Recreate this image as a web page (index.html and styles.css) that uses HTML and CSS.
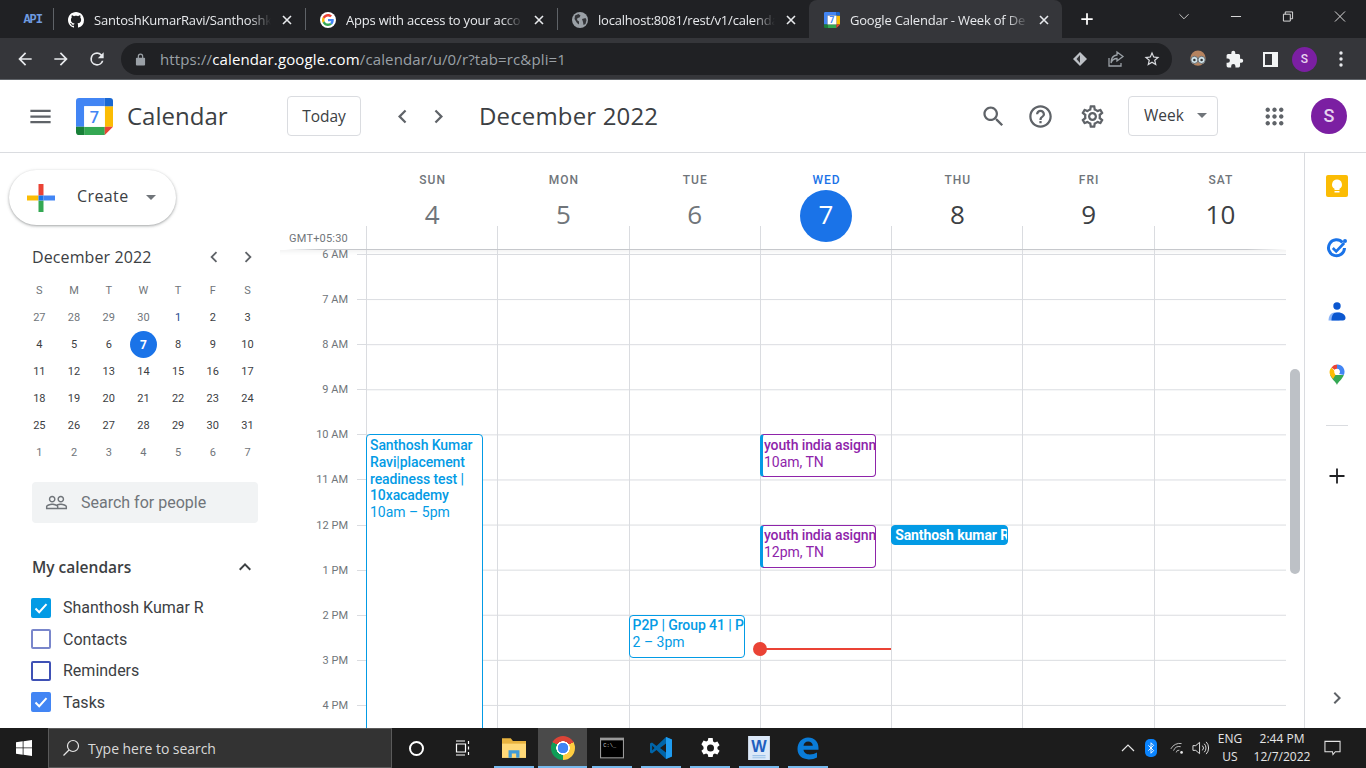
FILE: index.html
```html
<!DOCTYPE html>
<html lang="en">
<head>
    <meta charset="UTF-8">
    <title>Google Calendar - Week of December 4, 2022</title>
    <link rel="stylesheet" href="styles.css">
</head>
<body>

    <svg class="defs" width="0" height="0">
        <symbol id="cal-logo" viewBox="0 0 36 36">
            <path fill="#4285f4" d="M3 0h25v8H8v20H0V3a3 3 0 0 1 3-3z"/>
            <path fill="#fbbc04" d="M28 8h8v20h-8z"/>
            <path fill="#34a853" d="M8 28h20v8H8z"/>
            <path fill="#188038" d="M0 28h8v8H3a3 3 0 0 1-3-3z"/>
            <path fill="#ea4335" d="M28 28h8l-8 8z"/>
            <path fill="#1967d2" d="M28 0h5a3 3 0 0 1 3 3v5h-8z"/>
            <path fill="#fff" d="M8 8h20v20H8z"/>
        </symbol>
        <symbol id="g-logo" viewBox="0 0 48 48">
            <path fill="#ea4335" d="M24 9.5c3.54 0 6.71 1.22 9.21 3.6l6.85-6.85C35.9 2.38 30.47 0 24 0 14.62 0 6.51 5.38 2.56 13.22l7.98 6.19C12.43 13.72 17.74 9.5 24 9.5z"/>
            <path fill="#4285f4" d="M46.98 24.55c0-1.57-.15-3.09-.38-4.55H24v9.02h12.94c-.58 2.96-2.26 5.48-4.78 7.18l7.73 6c4.51-4.18 7.09-10.36 7.09-17.65z"/>
            <path fill="#fbbc05" d="M10.53 28.59c-.48-1.45-.76-2.99-.76-4.59s.27-3.14.76-4.59l-7.98-6.19C.92 16.46 0 20.12 0 24c0 3.88.92 7.54 2.56 10.78l7.97-6.19z"/>
            <path fill="#34a853" d="M24 48c6.48 0 11.93-2.13 15.89-5.81l-7.73-6c-2.15 1.45-4.92 2.3-8.16 2.3-6.26 0-11.57-4.22-13.47-9.91l-7.98 6.19C6.51 42.62 14.62 48 24 48z"/>
        </symbol>
        <symbol id="ic-x" viewBox="0 0 12 12">
            <path d="M2 2l8 8M10 2l-8 8" stroke="#e8eaed" stroke-width="1.6" fill="none"/>
        </symbol>
        <symbol id="ic-left" viewBox="0 0 24 24"><path d="M15.41 7.41 14 6l-6 6 6 6 1.41-1.41L10.83 12z"/></symbol>
        <symbol id="ic-right" viewBox="0 0 24 24"><path d="M8.59 16.59 10 18l6-6-6-6-1.41 1.41L13.17 12z"/></symbol>
        <symbol id="ic-check" viewBox="0 0 20 20"><path d="M4.5 10.5l3.7 3.7 7.3-8" stroke="#fff" stroke-width="2" fill="none"/></symbol>
    </svg>

    <!-- barra de pestañas -->
    <div class="tabstrip">
        <div class="tab-pinned"><span class="api-tag">API</span></div>
        <div class="tab">
            <svg class="favicon" viewBox="0 0 16 16"><path fill="#fff" d="M8 0C3.58 0 0 3.58 0 8c0 3.54 2.29 6.53 5.47 7.59.4.07.55-.17.55-.38 0-.19-.01-.82-.01-1.49-2.01.37-2.53-.49-2.69-.94-.09-.23-.48-.94-.82-1.13-.28-.15-.68-.52-.01-.53.63-.01 1.08.58 1.23.82.72 1.21 1.87.87 2.33.66.07-.52.28-.87.51-1.07-1.78-.2-3.64-.89-3.64-3.95 0-.87.31-1.59.82-2.15-.08-.2-.36-1.02.08-2.12 0 0 .67-.21 2.2.82.64-.18 1.32-.27 2-.27.68 0 1.36.09 2 .27 1.53-1.04 2.2-.82 2.2-.82.44 1.1.16 1.92.08 2.12.51.56.82 1.27.82 2.15 0 3.07-1.87 3.75-3.65 3.95.29.25.54.73.54 1.48 0 1.07-.01 1.93-.01 2.2 0 .21.15.46.55.38A8.013 8.013 0 0016 8c0-4.42-3.58-8-8-8z"/></svg>
            <span class="tab-title">SantoshKumarRavi/Santhoshk</span>
            <svg class="tab-close"><use href="#ic-x"/></svg>
        </div>
        <div class="tab">
            <span class="g-favicon"><svg width="12" height="12"><use href="#g-logo"/></svg></span>
            <span class="tab-title">Apps with access to your acco</span>
            <svg class="tab-close"><use href="#ic-x"/></svg>
        </div>
        <div class="tab">
            <svg class="favicon" viewBox="0 0 16 16"><circle cx="8" cy="8" r="8" fill="#9aa0a6"/><path fill="#35363a" d="M3 3.5 6.5 2l2 1.5-1 2-2 .5-.5 2 2 1.5v3L5 11 2.5 7zM10 7l3.5-1 1 2-1 4-2 1-.5-3z"/></svg>
            <span class="tab-title">localhost:8081/rest/v1/calenda</span>
            <svg class="tab-close"><use href="#ic-x"/></svg>
        </div>
        <div class="tab tab-active">
            <svg class="favicon" viewBox="0 0 36 36"><use href="#cal-logo"/><text x="18" y="25" text-anchor="middle" font-family="Roboto" font-size="19" font-weight="700" fill="#4285f4">7</text></svg>
            <span class="tab-title">Google Calendar - Week of De</span>
            <svg class="tab-close"><use href="#ic-x"/></svg>
        </div>
        <svg class="new-tab" viewBox="0 0 16 16"><path d="M8 1.5v13M1.5 8h13" stroke="#fff" stroke-width="2"/></svg>
        <div class="win-controls">
            <svg viewBox="0 0 12 12"><path d="M1 3.5 6 8.5l5-5" stroke="#d5d5d5" fill="none"/></svg>
            <svg viewBox="0 0 12 12"><path d="M0.5 6h11" stroke="#e8e8e8"/></svg>
            <svg viewBox="0 0 12 12"><path d="M1 3.5h7.5V11H1zM3 3.5V1h8v7.5H8.500" stroke="#e8e8e8" fill="none"/></svg>
            <svg viewBox="0 0 12 12"><path d="M.5.5l11 11M11.500.5l-11 11" stroke="#e8e8e8" fill="none"/></svg>
        </div>
    </div>

    <!-- barra de direcciones -->
    <div class="toolbar">
        <svg class="tool-ic" viewBox="0 0 24 24"><path fill="#e8eaed" d="M20 11H7.83l5.59-5.59L12 4l-8 8 8 8 1.41-1.41L7.83 13H20z"/></svg>
        <svg class="tool-ic" viewBox="0 0 24 24"><path fill="#e8eaed" d="m12 4-1.41 1.41L16.17 11H4v2h12.17l-5.58 5.59L12 20l8-8z"/></svg>
        <svg class="tool-ic" viewBox="0 0 24 24"><path fill="#e8eaed" d="M17.65 6.35A7.96 7.96 0 0 0 12 4a8 8 0 1 0 7.73 10h-2.08A6 6 0 1 1 12 6c1.66 0 3.14.69 4.22 1.78L13 11h7V4z"/></svg>
        <div class="omnibox">
            <svg class="lock" viewBox="0 0 12 14"><path fill="#9aa0a6" d="M3 5V3.500a3 3 0 0 1 6 0V5h1a1 1 0 0 1 1 1v6.500a1 1 0 0 1-1 1H2a1 1 0 0 1-1-1V6a1 1 0 0 1 1-1zm1.300 0h3.400V3.500a1.700 1.700 0 0 0-3.400 0z"/></svg>
            <span class="url">https://<b>calendar.google.com</b>/calendar/u/0/r?tab=rc&amp;pli=1</span>
            <svg class="omni-ic" viewBox="0 0 18 18"><path fill="#bdc1c6" d="M9 2l7 7-7 7-7-7z"/><path fill="#35363a" d="M9 5 5.500 9 9 13z"/></svg>
            <svg class="omni-ic" viewBox="0 0 18 18"><path fill="none" stroke="#9aa0a6" stroke-width="1.300" d="M2 8v8h12v-3M10 2l6 4.500-6 4.500V8.500C7 8.500 5 10 4 13c0-4 2-7.500 6-8z"/></svg>
            <svg class="omni-ic" viewBox="0 0 24 24"><path fill="#dadce0" d="m22 9.240-7.190-.62L12 2 9.190 8.630 2 9.240l5.460 4.730L5.820 21 12 17.270 18.180 21l-1.630-7.030zM12 15.400l-3.760 2.270 1-4.280-3.320-2.880 4.380-.38L12 6.100l1.710 4.040 4.380.38-3.320 2.880 1 4.280z"/></svg>
        </div>
        <svg class="ext-owl" viewBox="0 0 20 20"><circle cx="10" cy="9" r="8.500" fill="#b5835f"/><circle cx="6" cy="11" r="4" fill="#cfe3ea" stroke="#5f6368"/><circle cx="14" cy="11" r="4" fill="#cfe3ea" stroke="#5f6368"/><circle cx="6" cy="11" r="1.400" fill="#333"/><circle cx="14" cy="11" r="1.400" fill="#333"/></svg>
        <svg class="ext-puzzle" viewBox="0 0 24 24"><path fill="#f1f3f4" d="M20.500 11H19V7a2 2 0 0 0-2-2h-4V3.500a2.500 2.500 0 0 0-5 0V5H4a2 2 0 0 0-2 2v3.800h1.500a2.700 2.700 0 0 1 0 5.400H2V20a2 2 0 0 0 2 2h3.800v-1.500a2.700 2.700 0 0 1 5.400 0V22H17a2 2 0 0 0 2-2v-4h1.500a2.500 2.500 0 0 0 0-5z"/></svg>
        <span class="side-panel"></span>
        <span class="chrome-avatar">S</span>
        <svg class="kebab" viewBox="0 0 4 16"><circle cx="2" cy="2" r="1.700"/><circle cx="2" cy="8" r="1.700"/><circle cx="2" cy="14" r="1.700"/></svg>
    </div>

    <!-- cabecera de calendar -->
    <header class="app-head">
        <svg class="head-ic menu-ic" viewBox="0 0 24 24"><path d="M3 18h18v-2H3v2zm0-5h18v-2H3v2zm0-7v2h18V6H3z"/></svg>
        <svg class="logo" viewBox="0 0 36 36"><use href="#cal-logo"/><text x="18" y="24" text-anchor="middle" font-family="Roboto" font-size="16" font-weight="500" fill="#4285f4">7</text></svg>
        <span class="brand">Calendar</span>
        <button class="outline-btn today-btn">Today</button>
        <svg class="head-ic nav-prev"><use href="#ic-left"/></svg>
        <svg class="head-ic nav-next"><use href="#ic-right"/></svg>
        <span class="head-month">December 2022</span>
        <svg class="head-ic search-ic" viewBox="0 0 24 24"><path d="M15.500 14h-.79l-.28-.27C15.410 12.590 16 11.110 16 9.500 16 5.910 13.090 3 9.500 3S3 5.910 3 9.500 5.910 16 9.500 16c1.610 0 3.090-.59 4.230-1.570l.27.28v.79l5 4.990L20.490 19l-4.990-5zm-6 0C7.010 14 5 11.990 5 9.500S7.010 5 9.500 5 14 7.010 14 9.500 11.990 14 9.500 14z"/></svg>
        <svg class="head-ic help-ic" viewBox="0 0 24 24"><path d="M11 18h2v-2h-2v2zm1-16C6.480 2 2 6.480 2 12s4.480 10 10 10 10-4.480 10-10S17.520 2 12 2zm0 18c-4.410 0-8-3.590-8-8s3.590-8 8-8 8 3.590 8 8-3.590 8-8 8zm0-14c-2.210 0-4 1.790-4 4h2c0-1.100.9-2 2-2s2 .9 2 2c0 2-3 1.750-3 5h2c0-2.250 3-2.500 3-5 0-2.210-1.790-4-4-4z"/></svg>
        <svg class="head-ic gear-ic" viewBox="0 0 24 24"><path d="M19.430 12.980c.04-.32.07-.64.07-.98 0-.34-.03-.66-.07-.98l2.110-1.650c.19-.15.24-.42.12-.64l-2-3.460c-.09-.16-.26-.25-.44-.25-.06 0-.12.01-.17.03l-2.490 1c-.52-.4-1.080-.73-1.690-.98l-.38-2.650C14.460 2.180 14.250 2 14 2h-4c-.25 0-.46.18-.49.42l-.38 2.650c-.61.25-1.170.59-1.690.98l-2.490-1c-.06-.02-.12-.03-.18-.03-.17 0-.34.09-.43.25l-2 3.460c-.13.22-.07.49.12.64l2.110 1.650c-.04.32-.07.65-.07.98 0 .33.03.66.07.98l-2.110 1.650c-.19.15-.24.42-.12.64l2 3.460c.09.16.26.25.44.25.06 0 .12-.01.17-.03l2.490-1c.52.4 1.080.73 1.690.98l.38 2.650c.03.24.24.42.49.42h4c.25 0 .46-.18.49-.42l.38-2.650c.61-.25 1.170-.59 1.690-.98l2.490 1c.06.02.12.03.18.03.17 0 .34-.09.43-.25l2-3.460c.12-.22.07-.49-.12-.64l-2.110-1.650zm-1.980-1.710c.04.31.05.52.05.73 0 .21-.02.43-.05.73l-.14 1.130.89.7 1.080.84-.7 1.210-1.270-.51-1.040-.42-.9.68c-.43.32-.84.56-1.250.73l-1.060.43-.16 1.130-.2 1.350h-1.400l-.19-1.350-.16-1.130-1.060-.43c-.43-.18-.83-.41-1.230-.71l-.91-.7-1.060.43-1.270.51-.7-1.210 1.080-.84.89-.7-.14-1.130c-.03-.31-.05-.54-.05-.74s.02-.43.05-.73l.14-1.130-.89-.7-1.080-.84.7-1.210 1.270.51 1.040.42.9-.68c.43-.32.84-.56 1.250-.73l1.060-.43.16-1.130.2-1.350h1.390l.19 1.350.16 1.130 1.060.43c.43.18.83.41 1.230.71l.91.7 1.060-.43 1.270-.51.7 1.210-1.070.85-.89.7.14 1.130zM12 8c-2.210 0-4 1.790-4 4s1.790 4 4 4 4-1.790 4-4-1.790-4-4-4zm0 6c-1.100 0-2-.9-2-2s.9-2 2-2 2 .9 2 2-.9 2-2 2z"/></svg>
        <button class="outline-btn week-btn">Week<span class="caret"></span></button>
        <svg class="head-ic apps-ic" viewBox="0 0 24 24"><path d="M6 8c1.100 0 2-.9 2-2s-.9-2-2-2-2 .9-2 2 .9 2 2 2zm6 12c1.100 0 2-.9 2-2s-.9-2-2-2-2 .9-2 2 .9 2 2 2zm-6 0c1.100 0 2-.9 2-2s-.9-2-2-2-2 .9-2 2 .9 2 2 2zm0-6c1.100 0 2-.9 2-2s-.9-2-2-2-2 .9-2 2 .9 2 2 2zm6 0c1.100 0 2-.9 2-2s-.9-2-2-2-2 .9-2 2 .9 2 2 2zm4-8c0 1.100.9 2 2 2s2-.9 2-2-.9-2-2-2-2 .9-2 2zm-4 2c1.100 0 2-.9 2-2s-.9-2-2-2-2 .9-2 2 .9 2 2 2zm6 6c1.100 0 2-.9 2-2s-.9-2-2-2-2 .9-2 2 .9 2 2 2zm0 6c1.100 0 2-.9 2-2s-.9-2-2-2-2 .9-2 2 .9 2 2 2z"/></svg>
        <span class="account">S</span>
    </header>

    <main class="app-body">
        <aside class="sidebar">
            <button class="create-btn">
                <svg class="create-plus" viewBox="0 0 28 28">
                    <path fill="#fbbc04" d="M0 11.500h11.500v5H0z"/>
                    <path fill="#ea4335" d="M11.500 0h5v11.500h-5z"/>
                    <path fill="#4285f4" d="M16.500 11.500H28v5H16.500z"/>
                    <path fill="#34a853" d="M11.500 16.500h5V28h-5z"/>
                    <path fill="#1a73e8" d="M11.500 11.500h5v5h-5z"/>
                </svg>
                <span class="create-label">Create</span>
                <span class="caret"></span>
            </button>

            <div class="mini-head">
                <span class="mini-title">December 2022</span>
                <svg class="mini-nav"><use href="#ic-left"/></svg>
                <svg class="mini-nav"><use href="#ic-right"/></svg>
            </div>
            <div class="mini-grid">
                <span class="dow">S</span><span class="dow">M</span><span class="dow">T</span><span class="dow">W</span><span class="dow">T</span><span class="dow">F</span><span class="dow">S</span>
                <span class="out">27</span><span class="out">28</span><span class="out">29</span><span class="out">30</span><span class="first">1</span><span>2</span><span>3</span>
                <span>4</span><span>5</span><span>6</span><span class="sel">7</span><span>8</span><span>9</span><span>10</span>
                <span>11</span><span>12</span><span>13</span><span>14</span><span>15</span><span>16</span><span>17</span>
                <span>18</span><span>19</span><span>20</span><span>21</span><span>22</span><span>23</span><span>24</span>
                <span>25</span><span>26</span><span>27</span><span>28</span><span>29</span><span>30</span><span>31</span>
                <span class="out">1</span><span class="out">2</span><span class="out">3</span><span class="out">4</span><span class="out">5</span><span class="out">6</span><span class="out">7</span>
            </div>

            <div class="people">
                <svg class="people-ic" viewBox="0 0 24 24"><path fill="#70757a" d="M16.500 13c-1.200 0-3.070.34-4.500 1-1.430-.67-3.300-1-4.500-1C5.330 13 1 14.080 1 16.250V19h22v-2.750c0-2.170-4.330-3.250-6.500-3.250zm-4 4.500h-10v-1.250c0-.54 2.560-1.750 5-1.750s5 1.210 5 1.750v1.250zm9 0H14v-1.250c0-.46-.2-.86-.52-1.220.88-.3 1.960-.53 3.020-.53 2.440 0 5 1.210 5 1.750v1.250zM7.500 12c1.930 0 3.500-1.570 3.500-3.500S9.430 5 7.500 5 4 6.570 4 8.500 5.570 12 7.500 12zm0-5.500c1.100 0 2 .9 2 2s-.9 2-2 2-2-.9-2-2 .9-2 2-2zm9 5.500c1.930 0 3.500-1.570 3.500-3.500S18.430 5 16.500 5 13 6.570 13 8.500s1.570 3.500 3.500 3.500zm0-5.500c1.100 0 2 .9 2 2s-.9 2-2 2-2-.9-2-2 .9-2 2-2z"/></svg>
                <span>Search for people</span>
            </div>

            <div class="cal-list-head">
                <span>My calendars</span>
                <svg viewBox="0 0 24 24"><path fill="#3c4043" d="M7.410 15.410 12 10.830l4.590 4.580L18 14l-6-6-6 6z"/></svg>
            </div>
            <ul class="cal-list">
                <li><span class="chk chk-sky"><svg><use href="#ic-check"/></svg></span>Shanthosh Kumar R</li>
                <li><span class="chk chk-lav"></span>Contacts</li>
                <li><span class="chk chk-ind"></span>Reminders</li>
                <li><span class="chk chk-blue"><svg><use href="#ic-check"/></svg></span>Tasks</li>
            </ul>
        </aside>

        <section class="week">
            <div class="week-head">
                <div class="day-head"><span class="day-name">SUN</span><span class="day-num">4</span></div>
                <div class="day-head"><span class="day-name">MON</span><span class="day-num">5</span></div>
                <div class="day-head"><span class="day-name">TUE</span><span class="day-num">6</span></div>
                <div class="day-head is-today"><span class="day-name">WED</span><span class="day-num">7</span></div>
                <div class="day-head"><span class="day-name">THU</span><span class="day-num">8</span></div>
                <div class="day-head"><span class="day-name">FRI</span><span class="day-num">9</span></div>
                <div class="day-head"><span class="day-name">SAT</span><span class="day-num">10</span></div>
            </div>
            <div class="head-lines">
                <span class="gmt">GMT+05:30</span>
                <i></i><i></i><i></i><i></i><i></i><i></i><i></i>
            </div>

            <div class="week-body">
                <div class="times">
                    <div class="hour">6 AM</div>
                    <div class="hour">7 AM</div>
                    <div class="hour">8 AM</div>
                    <div class="hour">9 AM</div>
                    <div class="hour">10 AM</div>
                    <div class="hour">11 AM</div>
                    <div class="hour">12 PM</div>
                    <div class="hour">1 PM</div>
                    <div class="hour">2 PM</div>
                    <div class="hour">3 PM</div>
                    <div class="hour">4 PM</div>
                </div>
                <div class="days">
                    <div class="day">
                        <div class="event ev-sky ev-long">
                            <div class="ev-title ev-wrap">Santhosh Kumar Ravi|placement readiness test | 10xacademy</div>
                            <div>10am – 5pm</div>
                        </div>
                    </div>
                    <div class="day"></div>
                    <div class="day">
                        <div class="event ev-sky ev-p2p">
                            <div class="ev-title">P2P | Group 41 | P</div>
                            <div>2 – 3pm</div>
                        </div>
                    </div>
                    <div class="day">
                        <div class="event ev-purple ev-ten">
                            <div class="ev-title">youth india asignm</div>
                            <div>10am, TN</div>
                        </div>
                        <div class="event ev-purple ev-noon">
                            <div class="ev-title">youth india asignm</div>
                            <div>12pm, TN</div>
                        </div>
                        <div class="now-line"></div>
                    </div>
                    <div class="day">
                        <div class="event ev-solid"><div class="ev-title">Santhosh kumar R</div></div>
                    </div>
                    <div class="day"></div>
                    <div class="day"></div>
                </div>
            </div>
        </section>

        <div class="scroll-track"><div class="scroll-thumb"></div></div>

        <aside class="rail">
            <svg class="rail-ic" viewBox="0 0 22 22"><rect width="22" height="22" rx="2" fill="#fbbc04"/><path fill="#fff" d="M11 4.500a5 5 0 0 0-2.500 9.300V15h5v-1.200A5 5 0 0 0 11 4.500zM8.500 16h5v1.500h-5z"/></svg>
            <svg class="rail-ic" viewBox="0 0 22 22"><path d="M16.500 5.500A8 8 0 1 0 18.500 11" fill="none" stroke="#1a73e8" stroke-width="3"/><path d="M6.800 11l3.400 3.400 8-8.400" fill="none" stroke="#1a73e8" stroke-width="2.600"/><circle cx="19" cy="4" r="2" fill="#1a73e8"/></svg>
            <svg class="rail-ic rail-low" viewBox="0 0 22 22"><circle cx="11" cy="5" r="3.700" fill="#0b57d0"/><path fill="#8ab4f8" d="M2.500 19.500c0-4 2-8 6-8h5v8z"/><path fill="#0b57d0" d="M5.500 19.500c0-4.500 1.500-8 5.500-8h1c5 0 7.500 2.500 7.500 5.500 0 1.500-1 2.500-2.500 2.500z"/></svg>
            <svg class="rail-ic" viewBox="0 0 22 22">
                <path fill="#34a853" d="M11 22c-1-3-5.500-6-6.800-10l13.600 0C16.500 16 12 19 11 22z"/>
                <path fill="#fbbc04" d="M4.200 12A7 7 0 0 1 5.500 4.500L9 8.500a3 3 0 0 0 .5 3.500l-2.500 4z"/>
                <path fill="#ea4335" d="M5.500 4.500A7.500 7.500 0 0 1 11 1.500v4.500a3 3 0 0 0-2 1z"/>
                <path fill="#4285f4" d="M11 1.500a7.300 7.300 0 0 1 6.800 10.500L13 11a3 3 0 0 0-2-5z"/>
                <circle cx="11" cy="8.500" r="2.700" fill="#fff"/>
            </svg>
            <span class="rail-sep"></span>
            <svg class="rail-plus" viewBox="0 0 16 16"><path d="M8 .5v15M.5 8h15" stroke="#202124" stroke-width="1.800"/></svg>
            <svg class="rail-more" viewBox="0 0 24 24"><path fill="#5f6368" d="M8.590 16.590 10 18l6-6-6-6-1.410 1.410L13.170 12z"/></svg>
        </aside>
    </main>

    <!-- barra de tareas de windows -->
    <footer class="taskbar">
        <div class="tb-start">
            <svg viewBox="0 0 16 16"><path fill="#fff" d="M0 2.300 6.700 1.300v6.200H0zM7.500 1.200 16 0v7.500H7.500zM0 8.300h6.700v6.400L0 13.700zM7.500 8.300H16V16l-8.500-1.200z"/></svg>
        </div>
        <div class="tb-search">
            <svg viewBox="0 0 18 18"><circle cx="11" cy="7" r="5.500" fill="none" stroke="#e6e6e6" stroke-width="1.200"/><path d="M7 11 1.500 16.500" stroke="#e6e6e6" stroke-width="1.300"/></svg>
            <span>Type here to search</span>
        </div>
        <div class="tb-tool"><span class="cortana"></span></div>
        <div class="tb-tool">
            <svg class="taskview" viewBox="0 0 18 16"><path d="M1 1h9M1 15h9" stroke="#fff"/><path d="M1.500 4h9v8h-9zM13.500 1v3M13.500 6.500v3M13.500 12v3" stroke="#fff" fill="none" stroke-width="1.200"/></svg>
        </div>
        <div class="tb-app open">
            <svg viewBox="0 0 22 20"><path fill="#e8b33f" d="M0 1h8l2 2.500h12V19H0z"/><path fill="#ffd978" d="M0 6h22v13H0z"/><path fill="#3f9bd8" d="M6 12h10v7h-3v-4H9v4H6z"/></svg>
        </div>
        <div class="tb-app tb-active"><span class="chrome-logo"></span></div>
        <div class="tb-app open">
            <svg viewBox="0 0 22 19"><rect width="22" height="19" fill="#9a9a9a"/><rect x="1" y="2.500" width="20" height="15.500" fill="#000"/><text x="3" y="9" font-family="Liberation Mono" font-size="5" fill="#ccc">C:\_</text></svg>
        </div>
        <div class="tb-app open">
            <svg viewBox="0 0 24 24"><path fill="#0065a9" d="M17 1 7.500 10 3 6.500 1 7.500v9l2 1L7.500 14l9.500 9 6-2.500v-17zM17 7.500v9L11 12zM3.200 9.500 5.500 12l-2.300 2.500z"/><path fill="#1f9cf0" d="M17 1l6 2.500v17L17 23z"/></svg>
        </div>
        <div class="tb-app open">
            <svg viewBox="0 0 24 24"><path fill="#fff" fill-rule="evenodd" d="M19.400 13c.1-.3.100-.7.100-1s0-.7-.1-1l2.200-1.700-2.200-3.700-2.600 1c-.5-.4-1.100-.8-1.700-1L14.700 2h-4.400l-.4 2.600c-.6.2-1.200.6-1.700 1l-2.600-1-2.200 3.700L5.600 11c-.1.3-.1.700-.1 1s0 .7.1 1l-2.200 1.700 2.200 3.700 2.600-1c.5.4 1.100.8 1.700 1l.4 2.600h4.400l.4-2.600c.6-.2 1.200-.6 1.700-1l2.600 1 2.200-3.700zM12.500 15.500a3.500 3.500 0 1 1 0-7 3.500 3.500 0 0 1 0 7z"/></svg>
        </div>
        <div class="tb-app open">
            <svg viewBox="0 0 22 22"><path fill="#dbe8f8" d="M1 0h20v22H1z"/><text x="11" y="15" text-anchor="middle" font-family="Liberation Sans" font-weight="700" font-size="15" fill="#1f5fbf">W</text><path d="M5 18h12M5 20h12" stroke="#9cc2e8"/></svg>
        </div>
        <div class="tb-app open">
            <svg viewBox="0 0 24 24"><path fill="#0a7cd8" d="M12 1.500c6.500 0 10.500 4.500 10.500 10.500v1.800H7.500c.3 3 3 4.700 6.300 4.700 2.700 0 5-.7 7.200-2v5c-2.200 1.200-5 1.900-8.200 1.900-6.800 0-11.300-4-11.300-10.300C1.500 6.500 6 1.500 12 1.500zm4.800 8.300c0-2.500-2-4.200-4.700-4.200-2.500 0-4.300 1.700-4.600 4.200z"/></svg>
        </div>
        <div class="tray">
            <svg class="tray-caret" viewBox="0 0 14 8"><path d="M1 7l6-6 6 6" stroke="#e6e6e6" fill="none" stroke-width="1.200"/></svg>
            <span class="bt"><svg viewBox="0 0 10 16"><path d="M1.500 4.500l7 7L5 15V1l3.500 3.500-7 7" stroke="#fff" fill="none" stroke-width="1.200"/></svg></span>
            <svg class="tray-wifi" viewBox="0 0 18 16"><path d="M1 9a11 11 0 0 1 12-6M4 11a7 7 0 0 1 8-4.500M7 13a3 3 0 0 1 3.500-2.500" stroke="#d0d0d0" fill="none"/><circle cx="13" cy="13" r="1.500" fill="#e6e6e6"/></svg>
            <svg class="tray-vol" viewBox="0 0 18 16"><path d="M1 5.500h3L8 2v12L4 10.500H1zM11 5.500a3.500 3.500 0 0 1 0 5M13 3.500a6.500 6.500 0 0 1 0 9M15 1.500a9.500 9.500 0 0 1 0 13" stroke="#e6e6e6" fill="none"/></svg>
            <div class="lang">ENG<br>US</div>
            <div class="clock">2:44 PM<br>12/7/2022</div>
            <svg class="notif" viewBox="0 0 18 16"><path d="M1 1h16v11h-5l-2.500 3L9 12H1z" stroke="#e6e6e6" fill="none" stroke-width="1.100"/></svg>
        </div>
    </footer>

</body>
</html>
```

FILE: styles.css
```css
* {
    box-sizing: border-box;
}

html, body {
    margin: 0;
    padding: 0;
    height: 768px;
    overflow: hidden;
}

body {
    display: flex;
    flex-direction: column;
    font-family: Roboto, Arial, sans-serif;
    color: #3c4043;
    background-color: #fff;
}

.defs {
    position: absolute;
}

button {
    font-family: inherit;
    cursor: pointer;
}

/* ---- tabs ---- */
.tabstrip {
    height: 38px;
    flex-shrink: 0;
    display: flex;
    align-items: stretch;
    background-color: #202124;
    color: #e8eaed;
    font-family: "Open Sans", Arial, sans-serif;
    font-size: 13px;
}

.tab-pinned {
    width: 53px;
    display: flex;
    align-items: center;
    justify-content: flex-end;
    padding: 2px 11px 0 0;
}

.api-tag {
    font-family: "Liberation Mono", monospace;
    font-size: 12px;
    font-weight: 700;
    letter-spacing: -1px;
    color: #6f9be0;
}

.tab {
    width: 252px;
    display: flex;
    align-items: center;
    padding: 2px 12px 0 15px;
    gap: 10px;
    background: linear-gradient(#5f6368, #5f6368) left center / 1px 22px no-repeat;
}

.tab-active {
    width: 253px;
    padding-left: 15px;
    background: #35363a;
    border-radius: 8px 8px 0 0;
}

.favicon {
    width: 16px;
    height: 16px;
    flex-shrink: 0;
}

.g-favicon {
    width: 16px;
    height: 16px;
    flex-shrink: 0;
    border-radius: 50%;
    background-color: #fff;
    display: flex;
    align-items: center;
    justify-content: center;
}

.tab-title {
    flex: 1;
    min-width: 0;
    white-space: nowrap;
    overflow: hidden;
    -webkit-mask-image: linear-gradient(to right, #000 88%, transparent);
    mask-image: linear-gradient(to right, #000 88%, transparent);
    letter-spacing: -0.2px;
}

.tab-close {
    width: 12px;
    height: 12px;
    flex-shrink: 0;
}

.new-tab {
    width: 14px;
    height: 14px;
    margin: 12px 0 0 18px;
}

.win-controls {
    margin-left: auto;
    display: flex;
    align-items: flex-start;
}

.win-controls svg {
    width: 52px;
    height: 11px;
    margin-top: 11px;
}

/* ---- address bar ---- */
.toolbar {
    height: 42px;
    flex-shrink: 0;
    display: flex;
    align-items: center;
    padding: 1px 0 0 15px;
    background-color: #35363a;
    border-bottom: 1px solid #5f6368;
}

.tool-ic {
    width: 20px;
    height: 20px;
    margin-right: 16px;
}

.omnibox {
    width: 1051px;
    height: 32px;
    margin-left: -2px;
    display: flex;
    align-items: center;
    padding: 0 11px 0 14px;
    border-radius: 16px;
    background-color: #202124;
    color: #9aa0a6;
    font-family: "Open Sans", Arial, sans-serif;
    font-size: 15px;
}

.lock {
    width: 11px;
    height: 13px;
    margin-right: 14px;
}

.url {
    flex: 1;
    letter-spacing: .13px;
}

.url b {
    font-weight: 400;
    color: #fff;
}

.omni-ic {
    width: 18px;
    height: 18px;
    margin-left: 18px;
}

.ext-owl {
    width: 18px;
    height: 18px;
    margin-left: 17px;
}

.ext-puzzle {
    width: 19px;
    height: 19px;
    margin-left: 18px;
}

.side-panel {
    width: 15px;
    height: 15px;
    margin-left: 19px;
    border: 2px solid #f1f3f4;
    border-right-width: 6px;
}

.chrome-avatar {
    width: 25px;
    height: 25px;
    margin-left: 14px;
    border-radius: 50%;
    background-color: #7b1fa2;
    color: #e8d5ef;
    font-size: 12px;
    font-weight: 500;
    line-height: 25px;
    text-align: center;
}

.kebab {
    width: 4px;
    height: 16px;
    margin-left: 22px;
    fill: #e8eaed;
}

/* ---- calendar header ---- */
.app-head {
    height: 73px;
    flex-shrink: 0;
    display: flex;
    align-items: center;
    border-bottom: 1px solid #dadce0;
}

.head-ic {
    width: 27px;
    height: 27px;
    flex-shrink: 0;
    fill: #5f6368;
}

.menu-ic {
    margin-left: 26.5px;
}

.logo {
    width: 37px;
    height: 37px;
    margin-left: 22.5px;
}

.brand {
    width: 160px;
    margin: -2px 0 0 14px;
    font-family: "Open Sans", Arial, sans-serif;
    font-size: 24px;
    color: #3c4043;
}

.outline-btn {
    height: 40px;
    background-color: #fff;
    border: 1px solid #dadce0;
    border-radius: 4px;
    color: #3c4043;
    font-family: "Open Sans", Arial, sans-serif;
    font-size: 15.5px;
    font-weight: 500;
    padding-bottom: 2px;
}

.today-btn {
    width: 74px;
    padding-left: 0;
    padding-right: 0;
}

.nav-prev {
    margin-left: 27.5px;
}

.nav-next {
    margin-left: 9px;
}

.head-month {
    width: 500.5px;
    margin: -2px 0 0 27.5px;
    font-family: "Open Sans", Arial, sans-serif;
    font-size: 24px;
    letter-spacing: .15px;
    color: #3c4043;
    white-space: nowrap;
}

.help-ic {
    margin-left: 20px;
}

.gear-ic {
    margin-left: 25px;
}

.week-btn {
    width: 90px;
    margin-left: 22.5px;
    display: flex;
    align-items: center;
    justify-content: space-between;
    padding: 0 10px 2px 15px;
}

.caret {
    width: 0;
    height: 0;
    border-left: 5px solid transparent;
    border-right: 5px solid transparent;
    border-top: 5px solid #70757a;
}

.apps-ic {
    margin-left: 42.5px;
}

.account {
    width: 36px;
    height: 36px;
    margin-left: 23.5px;
    border-radius: 50%;
    background-color: #7b1fa2;
    color: #e6d3ee;
    font-size: 18px;
    font-weight: 500;
    line-height: 36px;
    text-align: center;
}

/* ---- body ---- */
.app-body {
    height: 575px;
    flex-shrink: 0;
    display: flex;
    overflow: hidden;
}

.sidebar {
    width: 280px;
    flex-shrink: 0;
    padding-left: 32px;
}

.create-btn {
    width: 167px;
    height: 55px;
    margin: 17px 0 0 -23px;
    display: flex;
    align-items: center;
    padding: 0 20px 0 18px;
    background-color: #fff;
    border: none;
    border-radius: 28px;
    box-shadow: 0 1px 2px 0 rgba(60, 64, 67, .3), 0 1px 3px 1px rgba(60, 64, 67, .15);
}

.create-plus {
    width: 28px;
    height: 28px;
}

.create-label {
    margin: 0 0 3px 22px;
    flex: 1;
    text-align: left;
    font-family: "Open Sans", Arial, sans-serif;
    font-size: 16px;
    font-weight: 500;
    letter-spacing: .4px;
    color: #3c4043;
}

.mini-head {
    height: 22px;
    margin-top: 21px;
    display: flex;
    align-items: center;
}

.mini-title {
    width: 159px;
    font-family: "Open Sans", Arial, sans-serif;
    font-size: 16px;
    font-weight: 500;
    letter-spacing: .1px;
    color: #3c4043;
    white-space: nowrap;
}

.mini-nav {
    width: 22px;
    height: 22px;
    margin-left: 12px;
    fill: #5f6368;
}

.mini-grid {
    width: 243px;
    margin: 9px 0 0 -10px;
    display: grid;
    grid-template-columns: repeat(7, 34.7px);
    grid-auto-rows: 27px;
    font-size: 11px;
    color: #3c4043;
}

.mini-grid span {
    display: flex;
    align-items: center;
    justify-content: center;
}

.mini-grid .dow,
.mini-grid .out {
    color: #70757a;
}

.mini-grid .first {
    color: #1d4a8f;
}

.mini-grid .sel {
    width: 27px;
    height: 27px;
    justify-self: center;
    border-radius: 50%;
    background-color: #1a73e8;
    color: #fff;
    font-weight: 700;
    font-size: 12px;
}

.people {
    width: 226px;
    height: 41px;
    margin-top: 16px;
    display: flex;
    align-items: center;
    padding-left: 13px;
    gap: 13px;
    background-color: #f1f3f4;
    border-radius: 4px;
    color: #70757a;
    font-size: 16px;
}

.people-ic {
    width: 23px;
    height: 23px;
}

.cal-list-head {
    width: 226px;
    margin-top: 34px;
    height: 20px;
    display: flex;
    align-items: center;
    justify-content: space-between;
    font-family: "Open Sans", Arial, sans-serif;
    font-size: 15.5px;
    font-weight: 600;
    color: #3c4043;
}

.cal-list-head svg {
    width: 24px;
    height: 24px;
    margin-right: 1px;
}

.cal-list {
    list-style: none;
    margin: 15px 0 0 -1px;
    padding: 0;
    font-size: 16px;
    color: #3c4043;
}

.cal-list li {
    height: 31.5px;
    display: flex;
    align-items: center;
    gap: 12px;
}

.chk {
    width: 20px;
    height: 20px;
    flex-shrink: 0;
    border-radius: 2px;
    border: 2px solid;
}

.chk svg {
    width: 20px;
    height: 20px;
    margin: -2px;
    display: block;
}

.chk-sky {
    background-color: #039be5;
    border-color: #039be5;
}

.chk-lav {
    border-color: #7986cb;
}

.chk-ind {
    border-color: #3f51b5;
}

.chk-blue {
    background-color: #4285f4;
    border-color: #4285f4;
}

/* ---- week grid ---- */
.week {
    width: 1006px;
    flex-shrink: 0;
    display: flex;
    flex-direction: column;
    overflow: hidden;
}

.week-head {
    height: 73px;
    flex-shrink: 0;
    display: grid;
    grid-template-columns: repeat(6, 131.3px) 1fr;
    padding-left: 86px;
}

.day-head {
    height: 73px;
    display: flex;
    flex-direction: column;
    align-items: center;
    padding: 20px 0 0 1px;
    position: relative;
}

.day-name {
    height: 14px;
    margin-left: 1px;
    font-size: 12px;
    font-weight: 500;
    line-height: 14px;
    letter-spacing: 1px;
    color: #70757a;
}

.day-num {
    width: 52px;
    height: 52px;
    margin-top: 3px;
    flex-shrink: 0;
    border-radius: 50%;
    font-family: "Open Sans", Arial, sans-serif;
    font-size: 26px;
    line-height: 48px;
    text-align: center;
    color: #70757a;
}

.day-head:nth-child(n+5) .day-num {
    color: #3c4043;
}

.is-today .day-name {
    color: #1a73e8;
}

.is-today .day-num {
    background-color: #1a73e8;
    color: #fff;
}

.head-lines {
    height: 24px;
    flex-shrink: 0;
    display: grid;
    grid-template-columns: 86px repeat(6, 131.3px) 1fr;
    border-style: solid;
    border-width: 0 0 1px;
    border-image: linear-gradient(to right, transparent 6px, #c6c8cc 40px, #c6c8cc 96%, transparent) 1;
}

.head-lines i {
    border-left: 1px solid #dadce0;
}

.gmt {
    padding: 6px 18px 0 0;
    text-align: right;
    font-size: 11px;
    letter-spacing: .2px;
    color: #70757a;
    white-space: nowrap;
}

.week-body {
    flex: 1;
    min-height: 0;
    display: flex;
    box-shadow: inset 0 6px 4px -4px rgba(60, 64, 67, .07);
}

.times {
    width: 86px;
    flex-shrink: 0;
    margin-top: -2px;
}

.hour {
    height: 45.1px;
    padding-right: 18px;
    text-align: right;
    font-size: 11px;
    line-height: 14px;
    color: #70757a;
    background: linear-gradient(#dadce0, #dadce0) right 6px / 9px 1px no-repeat;
}

.days {
    flex: 1;
    display: grid;
    grid-template-columns: repeat(6, 131.3px) 1fr;
}

.day {
    position: relative;
    border-left: 1px solid #dadce0;
    background-image: linear-gradient(#dadce0 1px, transparent 1px);
    background-size: 100% 45.1px;
    background-position: 0 4px;
}

.event {
    position: absolute;
    left: -1px;
    width: 117px;
    padding: 2px 0 0 3px;
    background-color: #fff;
    border: 1px solid;
    border-radius: 4px;
    font-size: 14px;
    line-height: 16.8px;
    overflow: hidden;
    white-space: nowrap;
}

.ev-title {
    font-weight: 500;
    letter-spacing: -0.1px;
}

.ev-wrap {
    white-space: normal;
}

.ev-sky {
    border-color: #039be5;
    color: #039be5;
}

.ev-purple {
    border-color: #8e24aa;
    border-left: 3px solid #039be5;
    color: #8e24aa;
    padding-left: 1px;
    height: 43px;
    width: 116px;
}

.ev-long {
    top: 184px;
    height: 340px;
}

.ev-p2p {
    top: 365px;
    width: 116px;
    height: 43px;
    padding: 1px 0 0 3px;
}

.ev-ten {
    top: 184px;
}

.ev-noon {
    top: 275px;
    padding-top: 1px;
}

.ev-solid {
    top: 275px;
    height: 20px;
    background-color: #039be5;
    border-color: #039be5;
    color: #fff;
    padding-top: 1px;
}

.ev-solid .ev-title {
    font-weight: 700;
}

.now-line {
    position: absolute;
    left: -1px;
    right: 0;
    top: 398px;
    height: 2px;
    background-color: #ea4335;
}

.now-line::before {
    content: "";
    position: absolute;
    left: -7px;
    top: -6px;
    width: 14px;
    height: 14px;
    border-radius: 50%;
    background-color: #ea4335;
}

.scroll-track {
    width: 18px;
    flex-shrink: 0;
    padding: 216px 4px 0;
}

.scroll-thumb {
    width: 10px;
    height: 205px;
    border-radius: 5px;
    background-color: #bdc1c6;
}

.rail {
    width: 62px;
    flex-shrink: 0;
    display: flex;
    flex-direction: column;
    align-items: center;
    border-left: 1px solid #dadce0;
    padding-left: 2px;
}

.rail-ic {
    width: 22px;
    height: 22px;
    margin-top: 40px;
}

.rail-ic:first-child {
    margin-top: 22px;
}

.rail-ic.rail-low {
    margin-top: 42px;
}

.rail-sep {
    width: 22px;
    height: 1px;
    margin-top: 40px;
    background-color: #dadce0;
}

.rail-plus {
    width: 16px;
    height: 16px;
    margin-top: 42px;
}

.rail-more {
    width: 24px;
    height: 24px;
    margin-top: 202px;
}

/* ---- windows taskbar ---- */
.taskbar {
    height: 40px;
    flex-shrink: 0;
    display: flex;
    align-items: stretch;
    background-color: #1c1c1c;
    color: #e6e6e6;
    font-family: "Open Sans", Arial, sans-serif;
}

.tb-start {
    width: 48px;
    display: flex;
    align-items: center;
    justify-content: center;
}

.tb-start svg {
    width: 16px;
    height: 16px;
}

.tb-search {
    width: 344px;
    display: flex;
    align-items: center;
    gap: 8px;
    padding-left: 13px;
    background-color: #333;
    border: 1px solid #5a5a5a;
    font-size: 14px;
    letter-spacing: -0.05px;
    color: #d9d9d9;
}

.tb-search svg {
    width: 18px;
    height: 18px;
}

.tb-tool {
    width: 48px;
    display: flex;
    align-items: center;
    justify-content: center;
}

.tb-tool + .tb-app {
    margin-left: 1px;
}

.cortana {
    width: 15px;
    height: 15px;
    border: 2px solid #fff;
    border-radius: 50%;
}

.taskview {
    width: 18px;
    height: 16px;
}

.tb-app {
    width: 49px;
    display: flex;
    align-items: center;
    justify-content: center;
}

.tb-app svg {
    width: 24px;
    height: 24px;
}

.tb-app.open {
    background: linear-gradient(#76b9ed, #76b9ed) center bottom / 40px 2px no-repeat;
}

.tb-active {
    background: linear-gradient(#76b9ed, #76b9ed) center bottom / 100% 2px no-repeat, #4a4a4a;
}

.chrome-logo {
    width: 24px;
    height: 24px;
    border-radius: 50%;
    background:
        radial-gradient(circle, #4285f4 0 5px, #fff 5.5px 6.5px, transparent 7px),
        conic-gradient(from 300deg, #db4437 0 120deg, #ffcd40 120deg 240deg, #0f9d58 240deg 360deg);
}

.tray {
    margin-left: auto;
    display: flex;
    align-items: center;
    font-size: 12px;
    text-align: center;
    line-height: 18px;
}

.tray-caret {
    width: 14px;
    height: 8px;
}

.bt {
    width: 12px;
    height: 18px;
    margin-left: 10px;
    display: flex;
    align-items: center;
    justify-content: center;
    border-radius: 5px;
    background-color: #0a84ff;
}

.bt svg {
    width: 8px;
    height: 12px;
}

.tray-wifi {
    width: 16px;
    height: 16px;
    margin-left: 13px;
}

.tray-vol {
    width: 17px;
    height: 16px;
    margin-left: 6px;
}

.lang {
    width: 32px;
    margin-left: 5px;
}

.clock {
    width: 62px;
    margin-left: 5px;
}

.notif {
    width: 17px;
    height: 16px;
    margin: 0 25px 0 11px;
}
```
